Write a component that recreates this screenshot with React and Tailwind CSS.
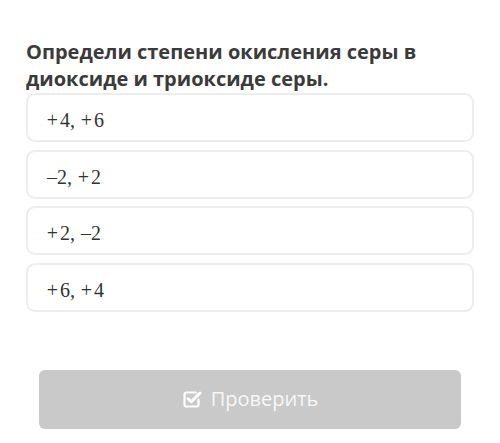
import React from 'react';

const answers = ['+4, +6', '–2, +2', '+2, –2', '+6, +4'];

// splits an answer into tokens so the plus gets KaTeX-like spacing
function Answer({ text }) {
  const parts = [];
  text.split('').forEach((ch, i) => {
    if (ch === '+') {
      parts.push(<span key={i} className="inline-block w-[15px] text-center">+</span>);
    } else if (ch === ' ') {
      parts.push(<span key={i} className="inline-block w-[4px]"> </span>);
    } else if (ch === '–') {
      parts.push(<span key={i} className="inline-block pl-[2px]">–</span>);
    } else {
      parts.push(<span key={i}>{ch}</span>);
    }
  });
  return (
    <span className="text-[20px] text-[#333] whitespace-pre" style={{ fontFamily: '"Liberation Serif", serif' }}>
      {parts}
    </span>
  );
}

function CheckIcon() {
  return (
    <svg width="20" height="20" viewBox="0 0 20 20" fill="none">
      <path d="M14 3.5H4.5a2 2 0 0 0-2 2v10a2 2 0 0 0 2 2h10a2 2 0 0 0 2-2v-5" stroke="white" strokeWidth="2.2" strokeLinecap="round" />
      <path d="M6.2 9.8l3 3L18 4" stroke="white" strokeWidth="3" strokeLinecap="round" strokeLinejoin="round" />
    </svg>
  );
}

export default function App() {
  return (
    <div className="w-[500px] h-[443px] bg-white overflow-hidden" style={{ fontFamily: '"Open Sans", sans-serif' }}>
      <div className="pt-[38px] pl-[26px] pr-[26px]">
        <h1 className="text-[20px] leading-[27px] font-bold text-[#3b3b3b]">
          Определи степени окисления серы в диоксиде и триоксиде серы.
        </h1>

        <div className="mt-[1px] flex flex-col gap-[7.5px]">
          {answers.map((a) => (
            <div key={a} className="h-[49px] border-2 border-[#ededed] rounded-[9px] flex items-center pl-[17px] pt-[5px]">
              <Answer text={a} />
            </div>
          ))}
        </div>
      </div>

      <div className="mt-[58px] px-[39px]">
        <button className="w-full h-[59px] bg-[#c9c9c9] rounded-[6px] flex items-center justify-center gap-[9px] text-white text-[20px]">
          <CheckIcon />
          <span className="text-[#f7f7f7]">Проверить</span>
        </button>
      </div>
    </div>
  );
}
